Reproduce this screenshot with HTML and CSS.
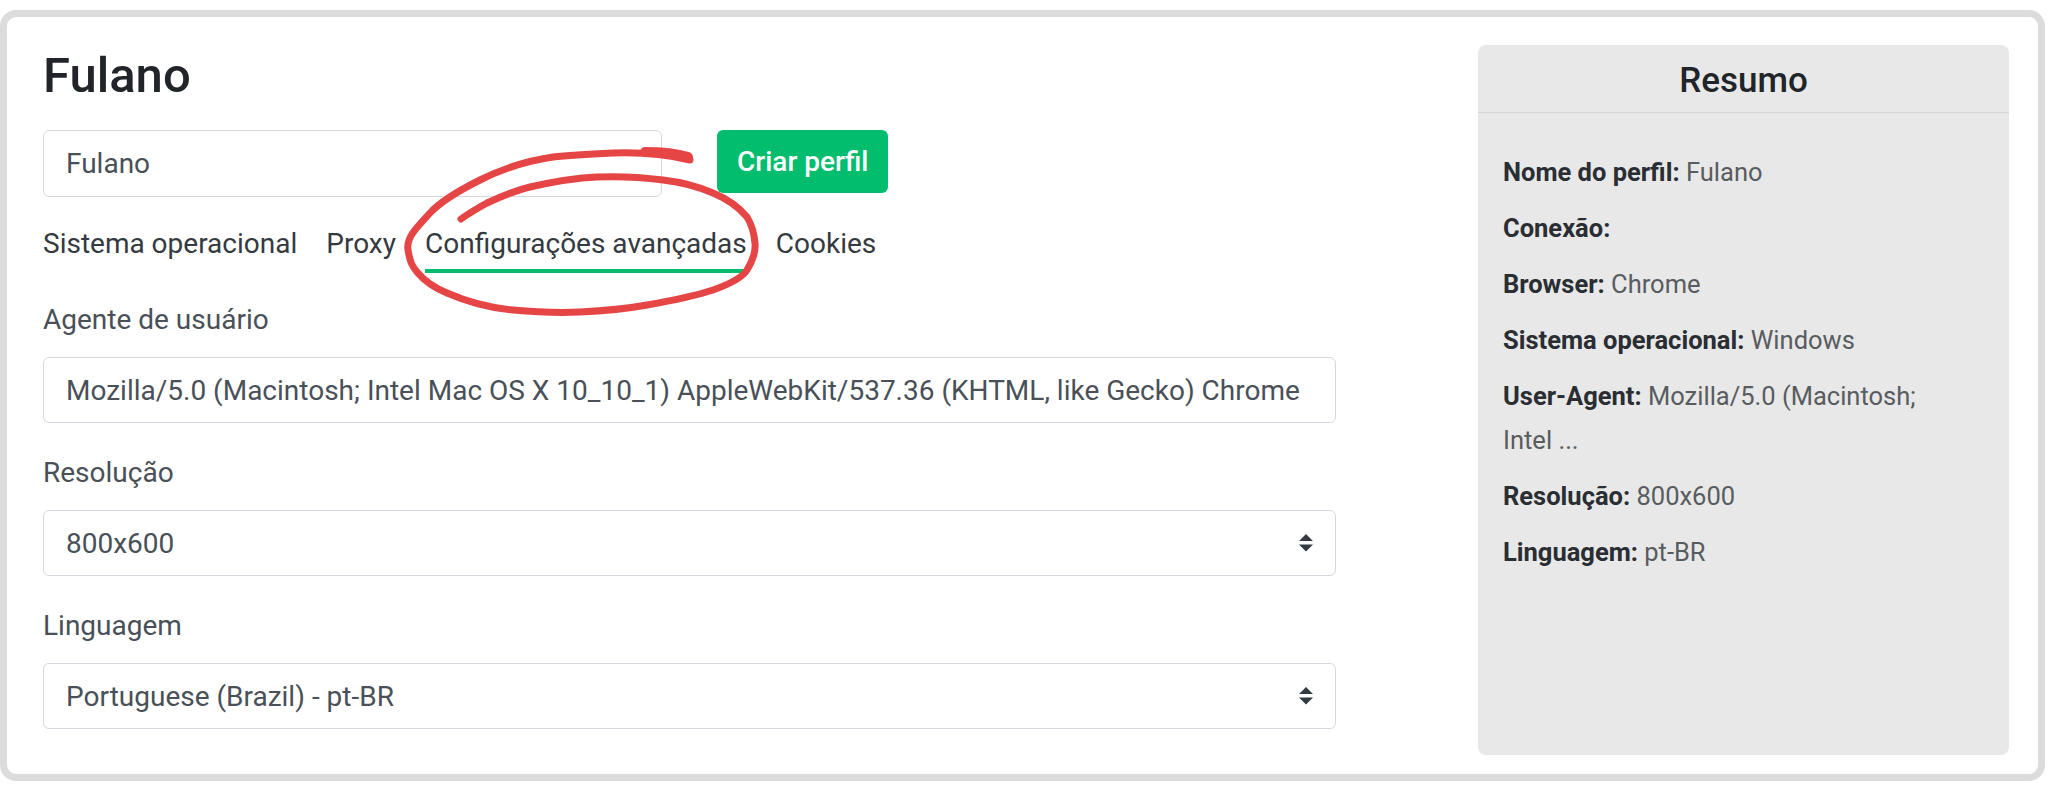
FILE: index.html
```html
<!DOCTYPE html>
<html lang="pt-BR">
<head>
<meta charset="utf-8">
<title>Fulano</title>
<link rel="stylesheet" href="styles.css">
</head>
<body>
<div class="frame">
  <main class="main">
    <h1 class="title">Fulano</h1>
    <div class="create-row">
      <input class="name-input" type="text" value="Fulano">
      <button class="btn-create" type="button">Criar perfil</button>
    </div>
    <nav class="tabs">
      <a class="tab">Sistema operacional</a>
      <a class="tab">Proxy</a>
      <a class="tab active">Configurações avançadas</a>
      <a class="tab">Cookies</a>
    </nav>
    <div class="group">
      <label class="label">Agente de usuário</label>
      <input class="field" type="text" value="Mozilla/5.0 (Macintosh; Intel Mac OS X 10_10_1) AppleWebKit/537.36 (KHTML, like Gecko) Chrome">
    </div>
    <div class="group">
      <label class="label">Resolução</label>
      <div class="field select">
        <span>800x600</span>
        <svg class="arrows" viewBox="0 0 4 5" width="14" height="17.5"><path d="M2 0L0 2h4zm0 5L0 3h4z" fill="#343a40"/></svg>
      </div>
    </div>
    <div class="group">
      <label class="label">Linguagem</label>
      <div class="field select">
        <span>Portuguese (Brazil) - pt-BR</span>
        <svg class="arrows" viewBox="0 0 4 5" width="14" height="17.5"><path d="M2 0L0 2h4zm0 5L0 3h4z" fill="#343a40"/></svg>
      </div>
    </div>
  </main>
  <aside class="summary">
    <div class="summary-head">Resumo</div>
    <div class="summary-body">
      <p><b>Nome do perfil:</b> Fulano</p>
      <p><b>Conexão:</b></p>
      <p><b>Browser:</b> Chrome</p>
      <p><b>Sistema operacional:</b> Windows</p>
      <p><b>User-Agent:</b> <span>Mozilla/5.0 (Macintosh;</span><br><span>Intel&nbsp;...</span></p>
      <p><b>Resolução:</b> 800x600</p>
      <p><b>Linguagem:</b> pt-BR</p>
    </div>
  </aside>
</div>
<svg class="annotation" width="2048" height="789" viewBox="0 0 2048 789">
  <path d="M690 160 C665 154, 640 152, 613 153 C590 154, 570 155, 553 157 C525 161, 500 170, 480 180 C460 190, 442 200, 430 213 C416 228, 406 238, 408 250 C410 262, 412 266, 417 272 C427 284, 437 289, 447 293 C470 303, 490 308, 513 310 C535 312, 558 313, 580 312 C602 311, 625 309, 647 305 C670 301, 695 296, 713 290 C730 284, 742 278, 747 270 C753 260, 756 252, 755 243 C754 232, 752 225, 747 217 C738 206, 725 198, 713 193 C697 186, 680 182, 663 180 C640 177, 620 176, 597 177 C573 178, 552 182, 530 187 C513 191, 500 197, 487 203 C476 209, 468 214, 461 219" fill="none" stroke="#e64545" stroke-width="7" stroke-linecap="round" stroke-linejoin="round"/>
  <path d="M688 157 C675 153, 660 152, 645 152" fill="none" stroke="#e64545" stroke-width="10" stroke-linecap="round"/>
</svg>
</body>
</html>
```

FILE: styles.css
```css
* { box-sizing: border-box; }

html, body {
  margin: 0;
  padding: 0;
  background: #ffffff;
}

body {
  position: relative;
  width: 2048px;
  height: 789px;
  overflow: hidden;
  padding-top: 10px;
  font-family: Roboto, "Liberation Sans", sans-serif;
  color: #212529;
}

.frame {
  width: 2045px;
  height: 771px;
  border: 7px solid #dcdcdc;
  border-radius: 16px;
  background: #ffffff;
  display: flex;
  align-items: flex-start;
  padding: 28px 27px 0 36px;
}

.main {
  width: 1293px;
  flex: none;
  padding-top: 2px;
}

.title {
  margin: 0 0 25px;
  font-size: 49px;
  line-height: 58px;
  font-weight: 500;
  color: #212529;
}

.create-row {
  display: flex;
  align-items: flex-start;
  gap: 55px;
}

.name-input {
  width: 619px;
  height: 67px;
  border: 1.5px solid #d3d8de;
  border-radius: 6px;
  padding: 0 22px;
  font-family: Roboto, "Liberation Sans", sans-serif;
  font-size: 28px;
  color: #495057;
  background: #fff;
  outline: none;
}

.btn-create {
  height: 63px;
  padding: 0 20px;
  border: none;
  border-radius: 6px;
  background: #02bd6d;
  color: #ffffff;
  font-family: Roboto, "Liberation Sans", sans-serif;
  font-size: 28px;
  font-weight: 500;
}

.tabs {
  display: flex;
  gap: 29px;
  margin: 26px 0 26px;
}

.tab {
  font-size: 28px;
  line-height: 42px;
  padding-bottom: 4px;
  border-bottom: 4px solid transparent;
  color: #343a40;
}

.tab.active {
  border-bottom-color: #02bd6d;
}

.group {
  margin-bottom: 29px;
}

.label {
  display: block;
  font-size: 28px;
  line-height: 42px;
  color: #495057;
  margin-bottom: 16px;
}

.field {
  display: block;
  width: 100%;
  height: 66px;
  border: 1.5px solid #d3d8de;
  border-radius: 6px;
  padding: 0 22px;
  font-family: Roboto, "Liberation Sans", sans-serif;
  font-size: 28px;
  color: #495057;
  background: #ffffff;
  outline: none;
}

.select {
  display: flex;
  align-items: center;
  justify-content: space-between;
}

.arrows {
  display: block;
  flex: none;
}

.summary {
  width: 531px;
  height: 710px;
  margin-left: 142px;
  flex: none;
  background: #e8e8e8;
  border-radius: 8px;
}

.summary-head {
  text-align: center;
  font-size: 35px;
  font-weight: 500;
  line-height: 42px;
  padding: 15px 0 10px;
  border-bottom: 1.5px solid #d4d4d4;
  color: #212529;
}

.summary-body {
  padding: 37px 25px;
}

.summary-body p {
  margin: 0 0 12px;
  font-size: 25.5px;
  line-height: 44px;
  color: #595c5f;
}

.summary-body b {
  font-weight: 700;
  color: #2a2e33;
}

.annotation {
  position: absolute;
  left: 0;
  top: 0;
  pointer-events: none;
}
```
